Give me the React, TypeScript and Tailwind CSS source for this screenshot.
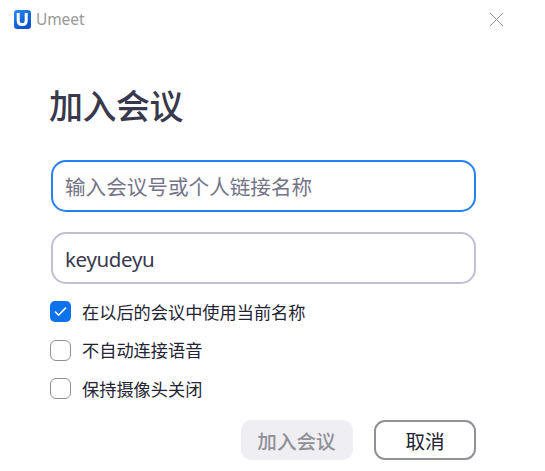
import { useState } from 'react';

const OPTIONS = [
  { id: 'keep-name', label: '在以后的会议中使用当前名称', on: true },
  { id: 'no-audio', label: '不自动连接语音', on: false },
  { id: 'no-video', label: '保持摄像头关闭', on: false },
];

function Logo() {
  return (
    <svg width="17" height="19" viewBox="0 0 17 19" fill="none">
      <defs>
        <linearGradient id="logo-bg" x1="0" y1="0" x2="0.6" y2="1">
          <stop offset="0" stopColor="#2b8af0" />
          <stop offset="1" stopColor="#0b52cc" />
        </linearGradient>
      </defs>
      <rect width="17" height="19" rx="3" fill="url(#logo-bg)" />
      <path d="M4.2 3v7.4q0 4.2 4 4.2t4-4.2V3" stroke="#fff" strokeWidth="3" />
    </svg>
  );
}

export default function App() {
  const [options, setOptions] = useState(OPTIONS);
  const [name, setName] = useState('keyudeyu');
  const [meetingId, setMeetingId] = useState('');

  const toggle = (id: string) =>
    setOptions(options.map((o) => (o.id === id ? { ...o, on: !o.on } : o)));

  return (
    <div className="h-[471px] w-[545px] overflow-hidden bg-white font-['Noto_Sans','Noto_Sans_CJK_SC',sans-serif] text-[#232333]">
      {/* Title bar */}
      <header className="flex h-[38px] items-center pl-3.5 pr-[41px]">
        <Logo />
        <span className="ml-[5px] text-[15.5px] leading-5 tracking-[-0.1px] text-[#999]">Umeet</span>
        <button aria-label="Close" className="ml-auto">
          <svg width="15" height="15" viewBox="0 0 15 15" stroke="#969696" strokeWidth="1">
            <path d="M1 1l13 13M14 1L1 14" />
          </svg>
        </button>
      </header>

      <main className="flex flex-col pl-[51px] pr-[69px]">
        <h1 className="-ml-[2px] mt-[42px] h-[50px] whitespace-nowrap font-['Noto_Sans_CJK_SC',sans-serif] text-[34px] font-medium leading-[50px] tracking-[-0.5px] text-[#39394d]">
          加入会议
        </h1>

        <input
          value={meetingId}
          onChange={(e) => setMeetingId(e.target.value)}
          placeholder="输入会议号或个人链接名称"
          className="mt-[30px] h-[52px] rounded-[15px] border-2 border-[#2680f2] px-3 font-['Noto_Sans_CJK_SC',sans-serif] text-[20.6px] outline-none placeholder:text-[#747487]"
        />
        <input
          value={name}
          onChange={(e) => setName(e.target.value)}
          className="mt-5 h-[52px] rounded-[15px] border-2 border-[#c2bfd3] px-3 pt-px text-[20.5px] tracking-[-0.35px] text-[#39394d] outline-none"
        />

        <div className="-ml-px mt-[17px] flex flex-col gap-[17.5px]">
          {options.map((o) => (
            <button
              key={o.id}
              role="checkbox"
              aria-checked={o.on}
              onClick={() => toggle(o.id)}
              className="flex h-[21px] items-center gap-[11px] text-left"
            >
              {o.on ? (
                <span className="flex size-[21px] items-center justify-center rounded-[5px] bg-[#0e72ed]">
                  <svg width="13" height="11" viewBox="0 0 13 11" fill="none" stroke="#fff" strokeWidth="1.6">
                    <path d="M1 5.5l3.6 3.7L12 1.6" />
                  </svg>
                </span>
              ) : (
                <span className="size-[21px] rounded-[6px] border-[1.5px] border-[#909096]" />
              )}
              <span className="-mt-px whitespace-nowrap font-['Noto_Sans_CJK_SC',sans-serif] text-[17.2px] leading-[21px]">{o.label}</span>
            </button>
          ))}
        </div>

        {/* Actions */}
        <div className="mt-[21px] flex justify-end gap-[21px] font-['Noto_Sans_CJK_SC',sans-serif] text-[19.6px]">
          <button className="h-10 w-28 rounded-[10px] bg-[#eeeef3] pr-px pt-px font-medium text-[#909096]">加入会议</button>
          <button className="h-10 w-[102px] rounded-[11px] border-2 border-[#909096] pt-px">取消</button>
        </div>
      </main>
    </div>
  );
}
